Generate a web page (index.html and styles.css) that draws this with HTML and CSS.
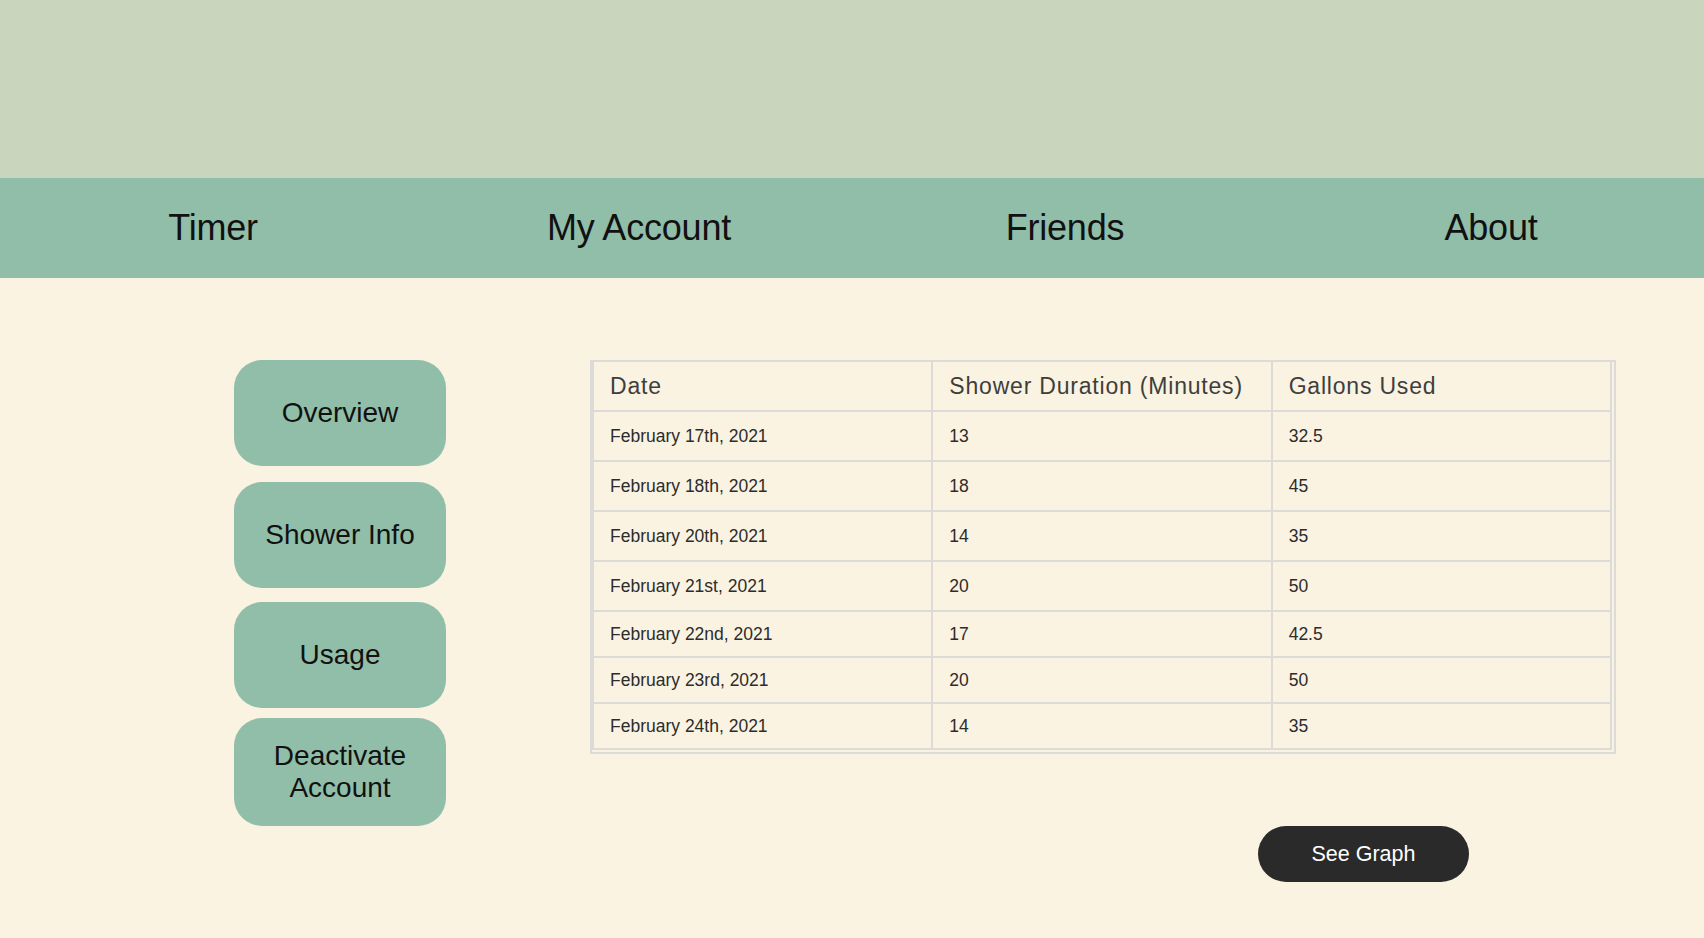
FILE: index.html
```html
<!DOCTYPE html>
<html lang="en">
<head>
<meta charset="utf-8">
<title>Usage</title>
<link rel="stylesheet" href="styles.css">
</head>
<body>
<header class="top-band"></header>
<nav class="main-nav">
  <a class="nav-item" href="#">Timer</a>
  <a class="nav-item" href="#">My Account</a>
  <a class="nav-item" href="#">Friends</a>
  <a class="nav-item" href="#">About</a>
</nav>
<main class="content">
  <aside class="side-menu">
    <a class="side-btn" href="#">Overview</a>
    <a class="side-btn side-btn-2" href="#">Shower Info</a>
    <a class="side-btn side-btn-3" href="#">Usage</a>
    <a class="side-btn side-btn-4" href="#">Deactivate<br>Account</a>
  </aside>
  <section class="usage">
    <div class="table-frame">
      <table class="usage-table">
        <thead>
          <tr class="row-tall"><th>Date</th><th>Shower Duration (Minutes)</th><th>Gallons Used</th></tr>
        </thead>
        <tbody>
          <tr class="row-tall"><td>February 17th, 2021</td><td>13</td><td>32.5</td></tr>
          <tr class="row-tall"><td>February 18th, 2021</td><td>18</td><td>45</td></tr>
          <tr class="row-tall"><td>February 20th, 2021</td><td>14</td><td>35</td></tr>
          <tr class="row-tall"><td>February 21st, 2021</td><td>20</td><td>50</td></tr>
          <tr class="row-short"><td>February 22nd, 2021</td><td>17</td><td>42.5</td></tr>
          <tr class="row-short"><td>February 23rd, 2021</td><td>20</td><td>50</td></tr>
          <tr class="row-short"><td>February 24th, 2021</td><td>14</td><td>35</td></tr>
        </tbody>
      </table>
    </div>
    <div class="actions">
      <button class="graph-btn" type="button">See Graph</button>
    </div>
  </section>
</main>
</body>
</html>
```

FILE: styles.css
```css
* { box-sizing: border-box; }

html, body {
  margin: 0;
  padding: 0;
}

body {
  background: #faf3e1;
  font-family: "Liberation Sans", Arial, Helvetica, sans-serif;
  color: #111;
  min-height: 938px;
}

.top-band {
  height: 178px;
  background: #cad5be;
}

.main-nav {
  height: 100px;
  background: #91bea9;
  display: flex;
  align-items: center;
}

.nav-item {
  flex: 1;
  text-align: center;
  font-size: 36px;
  letter-spacing: -0.2px;
  color: #111;
  text-decoration: none;
  line-height: 1;
}

.content {
  display: flex;
  align-items: flex-start;
  padding: 82px 0 0 234px;
}

.side-menu {
  width: 212px;
  display: flex;
  flex-direction: column;
}

.side-btn {
  height: 106px;
  background: #91bea9;
  border-radius: 28px;
  display: flex;
  align-items: center;
  justify-content: center;
  text-align: center;
  font-size: 28px;
  line-height: 32px;
  color: #111;
  text-decoration: none;
}

.side-btn-2 { margin-top: 16px; }
.side-btn-3 { margin-top: 14px; }
.side-btn-4 { margin-top: 10px; height: 108px; }

.usage {
  margin-left: 144px;
}

.table-frame {
  width: 1026px;
  border: 2px solid #dcdbd8;
  padding: 0 2px 2px 0;
}

.usage-table {
  width: 1020px;
  table-layout: fixed;
  border-collapse: separate;
  border-spacing: 0;
  border-left: 2px solid #dcdbd8;
}

.usage-table th,
.usage-table td {
  border-right: 2px solid #dcdbd8;
  border-bottom: 2px solid #dcdbd8;
  padding: 0 0 0 16px;
  text-align: left;
  vertical-align: middle;
}

.usage-table th {
  font-weight: 400;
  font-size: 23px;
  letter-spacing: 0.8px;
  color: #3e3e3e;
}

.usage-table td {
  font-size: 17.5px;
  color: #2c2c2c;
}

.row-tall th,
.row-tall td {
  height: 50px;
}

.row-short td {
  height: 46px;
}

.actions {
  padding: 72px 0 0 668px;
}

.graph-btn {
  width: 211px;
  height: 56px;
  border: none;
  border-radius: 28px;
  background: #2a2a2a;
  color: #fff;
  font-family: "Liberation Sans", Arial, Helvetica, sans-serif;
  font-size: 21.5px;
  padding: 0;
  cursor: pointer;
}
```
